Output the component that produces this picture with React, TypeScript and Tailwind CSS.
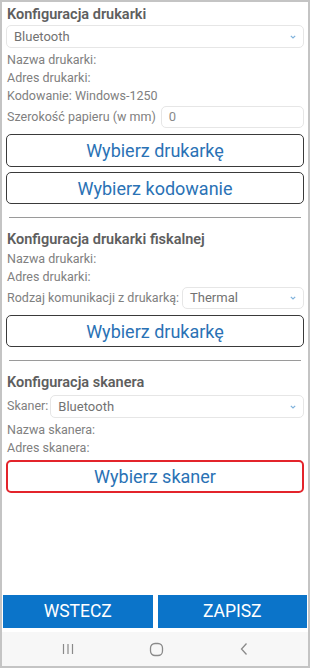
import React from "react";

const font = { fontFamily: "Roboto, 'Noto Sans', sans-serif" };

function Chevron() {
  return (
    <svg width="8" height="6" viewBox="0 0 8 6" className="shrink-0">
      <path d="M1.8 1.8 L4 4 L6.2 1.8" fill="none" stroke="#7fb2dc" strokeWidth="1.2" />
    </svg>
  );
}

function SelectBox({ value, className = "" }: { value: string; className?: string }) {
  return (
    <div
      className={`flex items-center justify-between rounded-[5px] border border-[#e6e6e6] bg-white pl-[7px] pr-[6px] text-[13px] text-[#727272] ${className}`}
    >
      <span>{value}</span>
      <Chevron />
    </div>
  );
}

function Label({ children }: { children: React.ReactNode }) {
  return <div className="h-[18px] pl-[1px] text-[12.5px] leading-[18px] text-[#808080]">{children}</div>;
}

function Title({ children }: { children: React.ReactNode }) {
  return <div className="pl-[1px] text-[14.5px] font-semibold leading-[18px] text-[#5e5e5e]">{children}</div>;
}

function OutlineButton({ children, className = "", red = false }: { children: React.ReactNode; className?: string; red?: boolean }) {
  return (
    <button
      className={`flex w-full items-center justify-center rounded-[5px] bg-white text-[18px] text-[#2a72b5] ${
        red ? "border-2 border-[#e3242b]" : "border border-[#3a3a3a]"
      } ${className}`}
    >
      {children}
    </button>
  );
}

export default function App() {
  return (
    <div style={font} className="flex h-[668px] w-[310px] flex-col border-2 border-[#c4c4c4] bg-white">
      <div className="flex flex-1 flex-col px-[4px]">
        {/* Printer */}
        <div className="mt-[4px]">
          <Title>Konfiguracja drukarki</Title>
        </div>
        <SelectBox value="Bluetooth" className="mt-[1px] h-[23px]" />
        <div className="mt-[3px]">
          <Label>Nazwa drukarki:</Label>
          <Label>Adres drukarki:</Label>
          <Label>Kodowanie: Windows-1250</Label>
        </div>
        <div className="mt-[1px] flex items-center gap-[5px]">
          <span className="pl-[1px] text-[12.5px] text-[#808080]">Szerokość papieru (w mm)</span>
          <div className="flex h-[22px] flex-1 items-center rounded-[5px] border border-[#e6e6e6] pl-[7px] text-[13px] text-[#8a8a8a]">
            0
          </div>
        </div>
        <OutlineButton className="mt-[6px] h-[33px]">Wybierz drukarkę</OutlineButton>
        <OutlineButton className="mt-[5px] h-[32px]">Wybierz kodowanie</OutlineButton>
        <div className="mx-[3px] mt-[13px] h-[1px] bg-[#9a9a9a]" />

        {/* Fiscal printer */}
        <div className="mt-[13px]">
          <Title>Konfiguracja drukarki fiskalnej</Title>
        </div>
        <div className="mt-[1px]">
          <Label>Nazwa drukarki:</Label>
          <Label>Adres drukarki:</Label>
        </div>
        <div className="mt-[1px] flex items-center gap-[3px]">
          <span className="pl-[1px] text-[12.5px] text-[#808080]">Rodzaj komunikacji z drukarką:</span>
          <SelectBox value="Thermal" className="h-[22px] flex-1" />
        </div>
        <OutlineButton className="mt-[6px] h-[32px]">Wybierz drukarkę</OutlineButton>
        <div className="mx-[3px] mt-[13px] h-[1px] bg-[#9a9a9a]" />

        {/* Scanner */}
        <div className="mt-[13px]">
          <Title>Konfiguracja skanera</Title>
        </div>
        <div className="mt-[3px] flex items-center gap-[2px]">
          <span className="pl-[1px] text-[12.5px] text-[#808080]">Skaner:</span>
          <SelectBox value="Bluetooth" className="h-[23px] flex-1" />
        </div>
        <div className="mt-[3px]">
          <Label>Nazwa skanera:</Label>
          <Label>Adres skanera:</Label>
        </div>
        <OutlineButton red className="mt-[3px] h-[33px]">Wybierz skaner</OutlineButton>
      </div>

      {/* Bottom actions */}
      <div className="flex gap-[5px] px-[1px]">
        <button className="flex h-[33px] flex-1 items-center justify-center bg-[#0b74c9] text-[17.5px] text-white">
          WSTECZ
        </button>
        <button className="flex h-[33px] flex-1 items-center justify-center bg-[#0b74c9] text-[17.5px] text-white">
          ZAPISZ
        </button>
      </div>

      {/* Android nav bar */}
      <div className="mt-[4px] flex h-[34px] items-center justify-around bg-[#f7f7f7] px-[22px]">
        <svg width="14" height="14" viewBox="0 0 14 14">
          <path d="M2.5 2 V12 M7 2 V12 M11.5 2 V12" stroke="#8a8a8a" strokeWidth="1.2" />
        </svg>
        <svg width="15" height="15" viewBox="0 0 15 15">
          <rect x="1.5" y="1.5" width="12" height="12" rx="4.5" fill="none" stroke="#8a8a8a" strokeWidth="1.3" />
        </svg>
        <svg width="10" height="14" viewBox="0 0 10 14">
          <path d="M7.5 1.5 L2.5 7 L7.5 12.5" fill="none" stroke="#8a8a8a" strokeWidth="1.3" />
        </svg>
      </div>
    </div>
  );
}
